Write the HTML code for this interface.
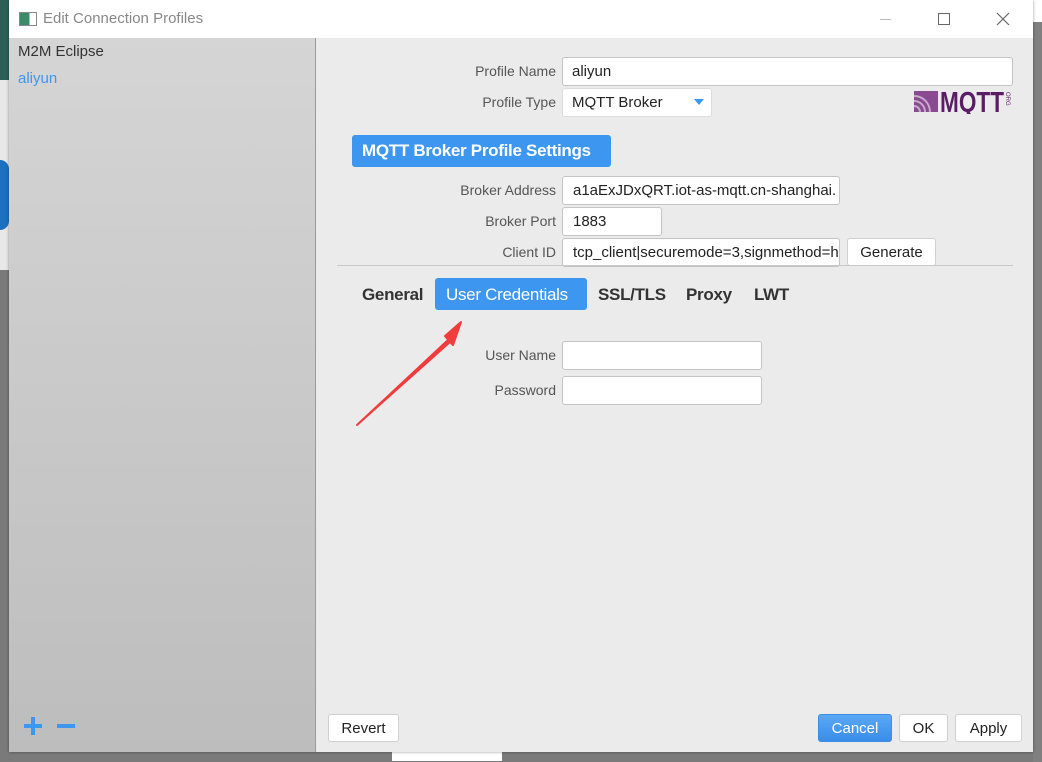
<!DOCTYPE html>
<html><head><meta charset="utf-8"><style>
*{box-sizing:border-box;margin:0;padding:0}
body{width:1042px;height:761px;overflow:hidden;position:relative;background:#7a7a7a;font-family:"Liberation Sans","Noto Sans CJK SC",sans-serif}
.a{position:absolute;white-space:nowrap}
.lbl{position:absolute;font-size:14px;color:#555;text-align:right;width:200px}
.inp{position:absolute;background:#fff;border:1px solid #c4c4c4;border-radius:3px;font-size:15px;color:#222;padding:0 9px;line-height:27px;white-space:nowrap;overflow:hidden}
.btn{position:absolute;background:#fff;border:1px solid #d0d0d0;border-radius:3px;font-size:15px;color:#222;text-align:center;line-height:27px}
.tab{position:absolute;font-size:17px;font-weight:bold;color:#333;top:285px;white-space:nowrap;letter-spacing:-0.3px}
</style></head><body>
<div class="a" style="left:0;top:0;width:9px;height:80px;background:#2e5e58"></div>
<div class="a" style="left:0;top:80px;width:9px;height:680px;background:#e8e8e8"></div>
<div class="a" style="left:0;top:160px;width:9px;height:70px;background:#1d6fc0;border-radius:0 30px 30px 0"></div>
<div class="a" style="left:0;top:270px;width:9px;height:491px;background:#7a7a7a"></div>
<div class="a" style="left:1033px;top:0;width:9px;height:22px;background:#fff"></div>
<div class="a" style="left:1033px;top:22px;width:9px;height:740px;background:#808080"></div>
<div class="a" style="left:392px;top:752px;width:110px;height:9px;background:#fff"></div>
<div class="a" style="left:9px;top:0;width:1024px;height:752px;background:#ebebeb;box-shadow:0 0 3px rgba(0,0,0,.4)"></div>
<div class="a" style="left:9px;top:0;width:1024px;height:38px;background:#fff"></div>
<div class="a" style="left:19px;top:12px;width:18px;height:14px;border:1px solid #888;background:linear-gradient(90deg,#3b8a6a 60%,#fff 60%)"></div>
<div class="a" style="left:43px;top:10px;font-size:15px;color:#888">Edit Connection Profiles</div>
<div class="a" style="left:880px;top:19px;width:11px;height:1px;background:#bbb"></div>
<div class="a" style="left:938px;top:13px;width:12px;height:12px;border:1px solid #666"></div>
<svg class="a" style="left:996px;top:12px" width="14" height="14"><path d="M1 1L13 13M13 1L1 13" stroke="#666" stroke-width="1.2"/></svg>
<div class="a" style="left:9px;top:38px;width:307px;height:714px;background:linear-gradient(#d5d5d5,#bdbdbd);border-right:1px solid #999"></div>
<div class="a" style="left:18px;top:43px;font-size:15px;color:#333">M2M Eclipse</div>
<div class="a" style="left:18px;top:70px;font-size:15px;color:#3d97f0">aliyun</div>
<div class="a" style="left:24px;top:724px;width:18px;height:4px;background:#3d97f0"></div>
<div class="a" style="left:31px;top:717px;width:4px;height:18px;background:#3d97f0"></div>
<div class="a" style="left:57px;top:724px;width:18px;height:4px;background:#3d97f0"></div>
<div class="lbl" style="left:356px;top:63px">Profile Name</div>
<div class="inp" style="left:562px;top:57px;width:451px;height:29px">aliyun</div>
<div class="lbl" style="left:356px;top:94px">Profile Type</div>
<div class="inp" style="left:562px;top:88px;width:150px;height:29px;border-color:#ddd">MQTT Broker</div>
<svg class="a" style="left:694px;top:99px" width="10" height="6"><path d="M0 0H10L5 6Z" fill="#3d97f0"/></svg>
<svg class="a" style="left:914px;top:88px" width="100" height="26">
<rect x="0" y="3" width="24" height="21" fill="#8a4a92"/>
<path d="M0 8A16 16 0 0 1 16 24M0 13A11 11 0 0 1 11 24M0 18A6 6 0 0 1 6 24" stroke="#c9a7cf" stroke-width="2" fill="none"/>
<text x="26" y="24" font-family="Liberation Sans" font-weight="bold" font-size="29" fill="#5b1c66" textLength="64" lengthAdjust="spacingAndGlyphs">MQTT</text>
<text x="92" y="4" font-size="6" fill="#5b1c66" transform="rotate(90 92 4)">ORG</text>
</svg>
<div class="a" style="left:352px;top:135px;width:259px;height:32px;background:#3d97f0;border-radius:3px;color:#fff;font-size:17px;font-weight:bold;line-height:32px;padding-left:10px;letter-spacing:-0.3px">MQTT Broker Profile Settings</div>
<div class="lbl" style="left:356px;top:182px">Broker Address</div>
<div class="inp" style="left:562px;top:176px;width:278px;height:29px;padding-left:10px">a1aExJDxQRT.iot-as-mqtt.cn-shanghai.</div>
<div class="lbl" style="left:356px;top:213px">Broker Port</div>
<div class="inp" style="left:562px;top:207px;width:100px;height:29px;padding-left:10px">1883</div>
<div class="lbl" style="left:356px;top:244px">Client ID</div>
<div class="inp" style="left:562px;top:238px;width:278px;height:29px;padding-left:10px">tcp_client|securemode=3,signmethod=h</div>
<div class="btn" style="left:847px;top:238px;width:89px;height:28px">Generate</div>
<div class="a" style="left:337px;top:265px;width:676px;height:1px;background:#c8c8c8"></div>
<div class="tab" style="left:362px">General</div>
<div class="a" style="left:435px;top:278px;width:152px;height:32px;background:#3d97f0;border-radius:3px"></div>
<div class="tab" style="left:446px;color:#fff;font-weight:normal">User Credentials</div>
<div class="tab" style="left:598px">SSL/TLS</div>
<div class="tab" style="left:686px">Proxy</div>
<div class="tab" style="left:754px">LWT</div>
<div class="lbl" style="left:356px;top:347px">User Name</div>
<div class="inp" style="left:562px;top:341px;width:200px;height:29px"></div>
<div class="lbl" style="left:356px;top:382px">Password</div>
<div class="inp" style="left:562px;top:376px;width:200px;height:29px"></div>
<svg class="a" style="left:350px;top:315px" width="120" height="115"><path d="M7 110L100 27L95 21L111 7L103 30L98 25Z" fill="#f03c3c" stroke="#f03c3c" stroke-width="2" stroke-linejoin="round"/></svg>
<div class="btn" style="left:328px;top:714px;width:71px;height:28px">Revert</div>
<div class="btn" style="left:818px;top:714px;width:74px;height:28px;background:linear-gradient(#5aa8f5,#3a8ee8);border-color:#3a8ee8;color:#fff">Cancel</div>
<div class="btn" style="left:899px;top:714px;width:49px;height:28px">OK</div>
<div class="btn" style="left:955px;top:714px;width:67px;height:28px">Apply</div>
</body></html>
